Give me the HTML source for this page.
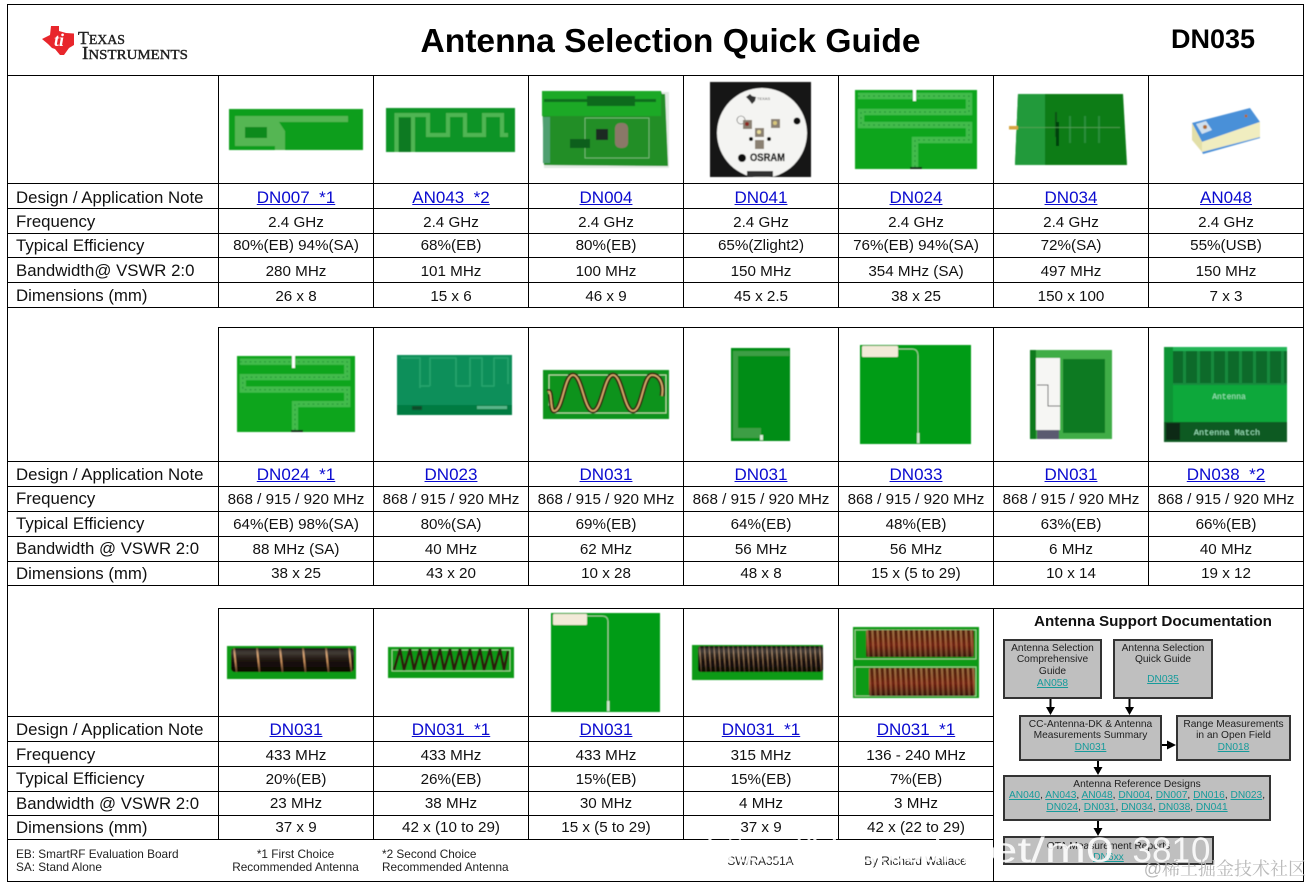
<!DOCTYPE html>
<html><head><meta charset="utf-8"><title>Antenna Selection Quick Guide</title>
<style>
html,body{margin:0;padding:0;background:#fff;width:1310px;height:886px;overflow:hidden}
body{position:relative;font-family:"Liberation Sans",sans-serif;color:#111}
.frame{position:absolute;left:7px;top:4px;width:1295px;height:876px;border:1px solid #000}
.hl{position:absolute;height:1px;background:#000}
table{position:absolute;border-collapse:collapse;table-layout:fixed;left:7px}
td,th{border:1px solid #000;padding:0;text-align:center;font-weight:normal;font-size:15.2px;white-space:nowrap;overflow:hidden}
th{text-align:left;padding-left:8px;font-size:16.8px}
td a{color:#0a0ad0;text-decoration:underline;font-size:17px}
tr.img th{border-top:0;border-left:0}
tr.d td,tr.d th{padding-top:2px}
tr.e td,tr.e th{padding-top:3px}
.b{position:absolute;background:#bfbfbf;border:2px solid #333;box-sizing:border-box;text-align:center;font-size:10.2px;line-height:11.8px;color:#222;white-space:nowrap}
.b a{color:#169b9b;text-decoration:underline}
.f{position:absolute;font-size:11.8px;line-height:13px;white-space:nowrap;color:#222}
</style></head><body>
<div class="frame"></div>
<div class="hl" style="left:7px;top:75px;width:1296px"></div>
<div style="position:absolute;left:420px;top:22px;width:501px;text-align:center;font-weight:bold;font-size:33.6px;line-height:40px;color:#000;white-space:nowrap">Antenna Selection Quick Guide</div>
<div style="position:absolute;left:1171px;top:24px;font-weight:bold;font-size:27px;line-height:30px;color:#000">DN035</div>

<table style="top:75px;width:1297px"><colgroup><col style="width:211px"><col style="width:155px"><col style="width:155px"><col style="width:155px"><col style="width:155px"><col style="width:155px"><col style="width:155px"><col style="width:155px"></colgroup>
<tr class="img" style="height:108px"><th></th><td></td><td></td><td></td><td></td><td></td><td></td><td></td></tr>
<tr class="e" style="height:25px"><th>Design / Application Note</th><td><a>DN007&nbsp;&nbsp;*1</a></td><td><a>AN043&nbsp;&nbsp;*2</a></td><td><a>DN004</a></td><td><a>DN041</a></td><td><a>DN024</a></td><td><a>DN034</a></td><td><a>AN048</a></td></tr>
<tr class="d" style="height:25px"><th>Frequency</th><td>2.4 GHz</td><td>2.4 GHz</td><td>2.4 GHz</td><td>2.4 GHz</td><td>2.4 GHz</td><td>2.4 GHz</td><td>2.4 GHz</td></tr>
<tr style="height:24px"><th>Typical Efficiency</th><td>80%(EB) 94%(SA)</td><td>68%(EB)</td><td>80%(EB)</td><td>65%(Zlight2)</td><td>76%(EB) 94%(SA)</td><td>72%(SA)</td><td>55%(USB)</td></tr>
<tr class="d" style="height:25px"><th>Bandwidth@ VSWR 2:0</th><td>280 MHz</td><td>101 MHz</td><td>100 MHz</td><td>150 MHz</td><td>354 MHz (SA)</td><td>497 MHz</td><td>150 MHz</td></tr>
<tr class="d" style="height:25px"><th>Dimensions (mm)</th><td>26 x 8</td><td>15 x 6</td><td>46 x 9</td><td>45 x 2.5</td><td>38 x 25</td><td>150 x 100</td><td>7 x 3</td></tr>
</table>

<table style="top:327px;width:1297px"><colgroup><col style="width:211px"><col style="width:155px"><col style="width:155px"><col style="width:155px"><col style="width:155px"><col style="width:155px"><col style="width:155px"><col style="width:155px"></colgroup>
<tr class="img" style="height:134px"><th></th><td></td><td></td><td></td><td></td><td></td><td></td><td></td></tr>
<tr class="d" style="height:25px"><th>Design / Application Note</th><td><a>DN024&nbsp;&nbsp;*1</a></td><td><a>DN023</a></td><td><a>DN031</a></td><td><a>DN031</a></td><td><a>DN033</a></td><td><a>DN031</a></td><td><a>DN038&nbsp;&nbsp;*2</a></td></tr>
<tr style="height:25px"><th>Frequency</th><td>868 / 915 / 920 MHz</td><td>868 / 915 / 920 MHz</td><td>868 / 915 / 920 MHz</td><td>868 / 915 / 920 MHz</td><td>868 / 915 / 920 MHz</td><td>868 / 915 / 920 MHz</td><td>868 / 915 / 920 MHz</td></tr>
<tr style="height:25px"><th>Typical Efficiency</th><td>64%(EB) 98%(SA)</td><td>80%(SA)</td><td>69%(EB)</td><td>64%(EB)</td><td>48%(EB)</td><td>63%(EB)</td><td>66%(EB)</td></tr>
<tr style="height:25px"><th>Bandwidth @ VSWR 2:0</th><td>88 MHz (SA)</td><td>40 MHz</td><td>62 MHz</td><td>56 MHz</td><td>56 MHz</td><td>6 MHz</td><td>40 MHz</td></tr>
<tr style="height:24px"><th>Dimensions (mm)</th><td>38 x 25</td><td>43 x 20</td><td>10 x 28</td><td>48 x 8</td><td>15 x (5 to 29)</td><td>10 x 14</td><td>19 x 12</td></tr>
</table>

<table style="top:608px;width:987px"><colgroup><col style="width:211px"><col style="width:155px"><col style="width:155px"><col style="width:155px"><col style="width:155px"><col style="width:155px"></colgroup>
<tr class="img" style="height:108px"><th></th><td></td><td></td><td></td><td></td><td></td></tr>
<tr class="d" style="height:25px"><th>Design / Application Note</th><td><a>DN031</a></td><td><a>DN031&nbsp;&nbsp;*1</a></td><td><a>DN031</a></td><td><a>DN031&nbsp;&nbsp;*1</a></td><td><a>DN031&nbsp;&nbsp;*1</a></td></tr>
<tr class="d" style="height:25px"><th>Frequency</th><td>433 MHz</td><td>433 MHz</td><td>433 MHz</td><td>315 MHz</td><td>136 - 240 MHz</td></tr>
<tr style="height:25px"><th>Typical Efficiency</th><td>20%(EB)</td><td>26%(EB)</td><td>15%(EB)</td><td>15%(EB)</td><td>7%(EB)</td></tr>
<tr style="height:24px"><th>Bandwidth @ VSWR 2:0</th><td>23 MHz</td><td>38 MHz</td><td>30 MHz</td><td>4 MHz</td><td>3 MHz</td></tr>
<tr style="height:24px"><th>Dimensions (mm)</th><td>37 x 9</td><td>42 x (10 to 29)</td><td>15 x (5 to 29)</td><td>37 x 9</td><td>42 x (22 to 29)</td></tr>
</table>
<div class="hl" style="left:993px;top:608px;width:310px"></div>
<div style="position:absolute;left:993px;top:608px;width:1px;height:273px;background:#000"></div>

<svg width="1310" height="886" viewBox="0 0 1310 886" style="position:absolute;left:0;top:0">
<defs>
<filter id="s" x="-5%" y="-5%" width="110%" height="110%"><feGaussianBlur stdDeviation="0.5"/></filter>
<pattern id="c1" width="23" height="40" patternUnits="userSpaceOnUse" patternTransform="skewX(6)"><rect width="23" height="40" fill="#1a100a"/><rect x="4" width="1.800" height="40" fill="#d89a62"/></pattern>
<pattern id="c2" width="4.800" height="40" patternUnits="userSpaceOnUse" patternTransform="skewX(4)"><rect width="4.800" height="40" fill="#1a100a"/><rect x="1" width="1.100" height="40" fill="#a07a55"/></pattern>
<pattern id="c3" width="5.200" height="40" patternUnits="userSpaceOnUse" patternTransform="skewX(3)"><rect width="5.200" height="40" fill="#5f2814"/><rect x="1" width="2.200" height="40" fill="#cf9f60"/></pattern>
<linearGradient id="gl" x1="0" y1="0" x2="0" y2="1"><stop offset="0" stop-color="#000" stop-opacity=".55"/><stop offset=".3" stop-color="#fff" stop-opacity=".12"/><stop offset=".6" stop-color="#000" stop-opacity=".1"/><stop offset="1" stop-color="#000" stop-opacity=".6"/></linearGradient>
<linearGradient id="gr" x1="0" y1="0" x2="0" y2="1"><stop offset="0" stop-color="#3a1a08" stop-opacity=".35"/><stop offset=".55" stop-color="#7a1a10" stop-opacity=".55"/><stop offset="1" stop-color="#1a0d05" stop-opacity=".6"/></linearGradient>
<g id="mz">
<path d="M3 6 H114 V22 H6 V35 H114 V50 H60 V78" fill="none" stroke="#43bb4c" stroke-width="6.500"/>
<path d="M3 6 H114 V22 H6 V35 H114 V50 H60 V78" fill="none" stroke="#259a38" stroke-width="1.200" stroke-dasharray="2 3"/>
</g>
</defs>

<!-- TI logo -->
<path d="M42 39 L50 35 L51 26 L59 26 L59 31 L66 33 L74 33.500 L74 45 L69 48 L64 55 L60 55 L55 49 L52 48 L48 44 Z" fill="#e8262c"/>
<text x="59" y="46" font-family="Liberation Serif" font-style="italic" font-weight="bold" font-size="18" fill="#fff" text-anchor="middle">ti</text>
<text x="78" y="44" font-family="Liberation Serif" font-size="14" fill="#222" stroke="#222" stroke-width=".4" textLength="47" lengthAdjust="spacingAndGlyphs"><tspan font-size="18">T</tspan>EXAS</text>
<text x="82" y="59" font-family="Liberation Serif" font-size="14" fill="#222" stroke="#222" stroke-width=".4" textLength="106" lengthAdjust="spacingAndGlyphs"><tspan font-size="18">I</tspan>NSTRUMENTS</text>

<g filter="url(#s)">
<!-- row 1 -->
<rect x="229" y="109" width="134" height="41" fill="#0a9e1e"/>
<path d="M235 116 H348 V122 H279 L285 131 V150 H275 V146 H235 Z" fill="#55b652"/>
<rect x="245" y="127" width="22" height="11" fill="#0c8a1c"/>
<rect x="267" y="130" width="9" height="10" fill="#55b652"/>

<rect x="386" y="108" width="129" height="44" fill="#0b9426"/>
<path d="M396.500 152 V115 H428 V135 H448 V115 H465 V135 H484 V115 H502 V135 H508 M413 115 V152" fill="none" stroke="#4fb552" stroke-width="4"/>
<rect x="399" y="118" width="12" height="34" fill="#087a20"/>

<rect x="544" y="92" width="125" height="76" fill="#cfdccf" opacity=".6"/>
<path d="M542 91 H661 L662 94 H665 L668 166 L544 165 Z" fill="#238e28"/>
<path d="M542 91 H661 V116 H542 Z" fill="#1ea928"/>
<rect x="544" y="99" width="112" height="3" fill="#0c6e1c"/>
<rect x="587" y="96" width="48" height="10" fill="#0b6a1a"/>
<rect x="585" y="118" width="64" height="40" fill="none" stroke="#8fc98f" stroke-width=".7"/>
<rect x="543" y="117" width="7" height="46" fill="#4f9f70"/>
<rect x="596" y="129" width="12" height="11" fill="#1b2b24"/>
<rect x="615" y="123" width="13" height="25" rx="5" fill="#8a7868"/>
<rect x="570" y="139" width="20" height="9" fill="#0d5f1c"/>

<rect x="710" y="82" width="101" height="95" fill="#151515"/>
<circle cx="762" cy="133" r="45" fill="#f4f4f2"/>
<rect x="747" y="171" width="26" height="6" fill="#333"/>
<path d="M746 97 l4-3 l2 2 l4 1 l-1 4 l-3 3 l-3-4 z" fill="#333"/>
<text x="750" y="161" font-family="Liberation Sans" font-weight="bold" font-size="11" textLength="35" lengthAdjust="spacingAndGlyphs" fill="#111" stroke="#111" stroke-width=".35">OSRAM</text>
<text x="757" y="100" font-family="Liberation Sans" font-size="4" fill="#555">TEXAS</text>
<circle cx="741" cy="120" r="4" fill="none" stroke="#444" stroke-width=".6"/>
<rect x="743" y="120" width="9" height="9" fill="#8a8072"/><circle cx="747" cy="124" r="2" fill="#8c2b22"/>
<rect x="771" y="119" width="9" height="9" fill="#8a8072"/><circle cx="775" cy="123" r="2" fill="#d8c67a"/>
<rect x="755" y="128" width="9" height="9" fill="#8a8072"/><circle cx="759" cy="132" r="2" fill="#e8dc9a"/>
<rect x="755" y="140" width="9" height="9" fill="#8a8072"/>
<circle cx="797" cy="121" r="3.500" fill="#111"/><circle cx="742" cy="158" r="4" fill="#111"/><circle cx="751" cy="139" r="2" fill="#111"/><circle cx="769" cy="139" r="2" fill="#111"/>

<rect x="855" y="90" width="122" height="79" fill="#07a51d"/>
<use href="#mz" transform="translate(855 90)"/>
<rect x="913" y="89" width="3" height="12" fill="#fff"/>
<rect x="910" y="167" width="12" height="2" fill="#0b3014"/>

<path d="M1018 94 H1123 L1127 165 H1015 Z" fill="#0a7c17"/>
<path d="M1018 94 H1045 V165 H1015 Z" fill="#229a3b"/>
<rect x="1055" y="112" width="2" height="25" fill="#0a5312"/>
<rect x="1056" y="122" width="3" height="24" fill="#05400c"/>
<rect x="1069" y="116" width="2" height="27" fill="#2a8d3b"/>
<rect x="1084" y="116" width="2" height="27" fill="#2a8d3b"/>
<rect x="1098" y="116" width="2" height="27" fill="#2a8d3b"/>
<path d="M1016 127.500 H1120" stroke="#5ca45c" stroke-width=".8"/>
<rect x="1009" y="126" width="9" height="3.500" fill="#d6a53f"/>

<path d="M1192 123 L1250 108 L1260 122 L1202 142 Z" fill="#4a90d8"/>
<path d="M1192 123 L1202 142 V152 L1192 140 Z" fill="#e2dfa8"/>
<path d="M1202 142 L1260 122 V137 L1202 152 Z" fill="#f0edc0"/>
<path d="M1202 152 L1260 137 V138 L1203 154 Z" fill="#4a90d8"/>
<path d="M1196 124 L1206 121 L1212 130 L1202 134 Z" fill="#cfe0ee"/>
<circle cx="1205" cy="127" r="2" fill="#b06a30"/><circle cx="1246" cy="116" r="1.500" fill="#b06a30"/>

<!-- row 2 -->
<rect x="237" y="356" width="118" height="76" fill="#07a51d"/>
<g transform="translate(237 356) scale(.967 .962)"><use href="#mz"/></g>
<rect x="292" y="356" width="3" height="12" fill="#fff"/>
<rect x="291" y="430" width="12" height="2" fill="#0b3014"/>

<rect x="397" y="355" width="115" height="60" fill="#0b8f5a"/>
<path d="M401 358 H420 V388 M420 358 V386 H430 M430 386 V358 H456 V386 H470 V358 H482 V386 H494 V358 H508 V384" fill="none" stroke="#27a56e" stroke-width="1.500"/>
<rect x="397" y="405" width="115" height="10" fill="#067c42"/>
<rect x="412" y="406" width="10" height="4" fill="#0b4d2a"/>
<rect x="477" y="406" width="30" height="3" fill="#59b58a"/>

<rect x="543" y="370" width="126" height="49" fill="#0c931c"/>
<path d="M549 375 H666 V413 H554 L549 405 Z" fill="none" stroke="#b6dfa6" stroke-width="1"/>
<path d="M548 392 C552 388 550 411 554 411 C563 411 564 375 573 375 C582 375 584 411 593 411 C602 411 604 375 613 375 C622 375 624 411 633 411 C642 411 643 375 652 375 C660 375 664 385 662 396" fill="none" stroke="#2e1a0c" stroke-width="5"/>
<path d="M548 392 C552 388 550 411 554 411 C563 411 564 375 573 375 C582 375 584 411 593 411 C602 411 604 375 613 375 C622 375 624 411 633 411 C642 411 643 375 652 375 C660 375 664 385 662 396" fill="none" stroke="#d4aa68" stroke-width="1.800"/>

<rect x="731" y="348" width="59" height="93" fill="#058d12"/>
<path d="M733 441 V351 H789 V356 H738 V428 H761 V438 H733" fill="#3d9e45"/>
<rect x="760" y="435" width="3" height="5" fill="#d8efd8"/>

<rect x="860" y="345" width="111" height="99" fill="#069c13"/>
<rect x="862" y="346" width="36" height="11" rx="1" fill="#f2ead8"/>
<path d="M898 349 H912 Q918 349 918 356 V443" fill="none" stroke="#9ed09c" stroke-width="1"/>
<rect x="917" y="433" width="2.500" height="10" fill="#cfe6cf"/>

<rect x="1030" y="350" width="82" height="89" fill="#3fad46"/>
<rect x="1030" y="350" width="6" height="89" fill="#0b7a1c"/>
<rect x="1036" y="358" width="24" height="72" fill="#f6f6f4"/>
<rect x="1063" y="359" width="42" height="74" fill="#0a7a22"/>
<path d="M1037 385 H1048 V406 H1060" fill="none" stroke="#666" stroke-width="1"/>
<rect x="1037" y="430" width="22" height="9" fill="#5a5a70"/>

<rect x="1164" y="347" width="123" height="95" fill="#0aa83a"/>
<rect x="1172" y="350" width="115" height="35" fill="#148a3c"/>
<path d="M1172 367 H1287" stroke="#0b6a2a" stroke-width="32" stroke-dasharray="11 3"/>
<rect x="1164" y="347" width="123" height="4" fill="#21b557"/>
<rect x="1164" y="347" width="9" height="95" fill="#0f9435"/>
<rect x="1164" y="422" width="123" height="20" fill="#0c5a22"/>
<rect x="1166" y="423" width="14" height="17" fill="#0a2a12"/>
<text x="1229" y="399" font-family="Liberation Mono" font-size="8" fill="#9fe8c0" text-anchor="middle">Antenna</text>
<text x="1227" y="435" font-family="Liberation Mono" font-size="8.500" fill="#9fe8c0" text-anchor="middle">Antenna Match</text>

<!-- row 3 -->
<rect x="227" y="646" width="129" height="33" fill="#0a9a16"/>
<rect x="231" y="648" width="123" height="24" rx="4" fill="url(#c1)"/>
<rect x="231" y="648" width="123" height="24" rx="4" fill="url(#gl)"/>
<rect x="388" y="647" width="126" height="31" fill="#0a9a16"/>
<rect x="392" y="650" width="118" height="21" fill="none" stroke="#b8dfa8" stroke-width=".8"/>
<path d="M394 670 L400 649 L404 670 L410 649 L414 670 L420 649 L424 670 L430 649 L434 670 L440 649 L444 670 L450 649 L454 670 L460 649 L464 670 L470 649 L474 670 L480 649 L484 670 L490 649 L494 670 L500 649 L504 670 L508 651" fill="none" stroke="#2b1a10" stroke-width="2.600"/>
<rect x="551" y="613" width="109" height="99" fill="#069c13"/>
<rect x="553" y="614" width="34" height="11" rx="1" fill="#f2ead8"/>
<path d="M587 616 H602 Q608 616 608 622 V711" fill="none" stroke="#9ed09c" stroke-width="1"/>
<rect x="607" y="701" width="2.500" height="10" fill="#cfe6cf"/>
<rect x="692" y="645" width="131" height="35" fill="#0a9a16"/>
<rect x="698" y="646" width="125" height="26" rx="3" fill="url(#c2)"/>
<rect x="698" y="646" width="125" height="26" rx="3" fill="url(#gl)"/>
<rect x="853" y="627" width="126" height="71" fill="#0a9a16"/>
<rect x="855" y="630" width="121" height="29" fill="none" stroke="#b8dfa8" stroke-width=".8"/>
<rect x="855" y="667" width="121" height="29" fill="none" stroke="#b8dfa8" stroke-width=".8"/>
<rect x="866" y="630" width="108" height="27" rx="2" fill="url(#c3)"/>
<rect x="866" y="630" width="108" height="27" rx="2" fill="url(#gr)"/>
<rect x="869" y="668" width="106" height="28" rx="2" fill="url(#c3)"/>
<rect x="869" y="668" width="106" height="28" rx="2" fill="url(#gr)"/>
</g>

<!-- arrows -->
<path d="M1050.500 699 V708" stroke="#000" stroke-width="2"/><path d="M1046 707 H1055 L1050.500 715 Z"/>
<path d="M1129.500 699 V708" stroke="#000" stroke-width="2"/><path d="M1125 707 H1134 L1129.500 715 Z"/>
<path d="M1098 760 V768" stroke="#000" stroke-width="2"/><path d="M1093.500 767 H1102.500 L1098 775 Z"/>
<path d="M1098 821 V829" stroke="#000" stroke-width="2"/><path d="M1093.500 828 H1102.500 L1098 836 Z"/>
<path d="M1161 745 H1169" stroke="#000" stroke-width="2"/><path d="M1167 740.500 V749.500 L1176 745 Z"/>
</svg>

<div style="position:absolute;left:994px;top:613px;width:318px;text-align:center;font-weight:bold;font-size:15.2px;line-height:18px;color:#111;white-space:nowrap">Antenna Support Documentation</div>
<div class="b" style="left:1003px;top:639px;width:99px;height:60px;padding-top:1.500px">Antenna Selection<br>Comprehensive<br>Guide<br><a>AN058</a></div>
<div class="b" style="left:1113px;top:639px;width:100px;height:60px;padding-top:1.500px">Antenna Selection<br>Quick Guide<div style="height:8px"></div><a>DN035</a></div>
<div class="b" style="left:1019px;top:715px;width:143px;height:46px;padding-top:1.500px">CC-Antenna-DK &amp; Antenna<br>Measurements Summary<br><a>DN031</a></div>
<div class="b" style="left:1176px;top:715px;width:115px;height:46px;padding-top:1.500px">Range Measurements<br>in an Open Field<br><a>DN018</a></div>
<div class="b" style="left:1003px;top:775px;width:268px;height:46px;padding-top:1.500px">Antenna Reference Designs<br><a>AN040</a>, <a>AN043</a>, <a>AN048</a>, <a>DN004</a>, <a>DN007</a>, <a>DN016</a>, <a>DN023</a>,<br><a>DN024</a>, <a>DN031</a>, <a>DN034</a>, <a>DN038</a>, <a>DN041</a></div>
<div class="b" style="left:1003px;top:836px;width:211px;height:29px;padding-top:2.500px">OTA Measurement Reports<br><a>DN6xx</a></div>

<div class="f" style="left:16px;top:848px">EB: SmartRF Evaluation Board<br>SA: Stand Alone</div>
<div class="f" style="left:218px;top:848px;width:155px;text-align:center">*1 First Choice<br>Recommended Antenna</div>
<div class="f" style="left:382px;top:848px">*2 Second Choice<br>Recommended Antenna</div>
<div class="f" style="left:683px;top:855px;width:155px;text-align:center">SW/RA351A</div>
<div class="f" style="left:838px;top:855px;width:155px;text-align:center">By Richard Wallace</div>

<div style="position:absolute;left:706px;top:831px;width:520px;font-size:35px;line-height:40px;color:#fff;opacity:.88;white-space:nowrap">https://blog.csdn.n<span style="display:inline-block;width:123px;transform:scaleX(1.41);transform-origin:left center">et/m0</span>_3810</div>
<div style="position:absolute;right:4px;top:859px;font-family:'Liberation Sans','Noto Serif CJK SC',serif;font-size:18px;line-height:20px;color:#b9b9b9;white-space:nowrap">@稀土掘金技术社区</div>
</body></html>
